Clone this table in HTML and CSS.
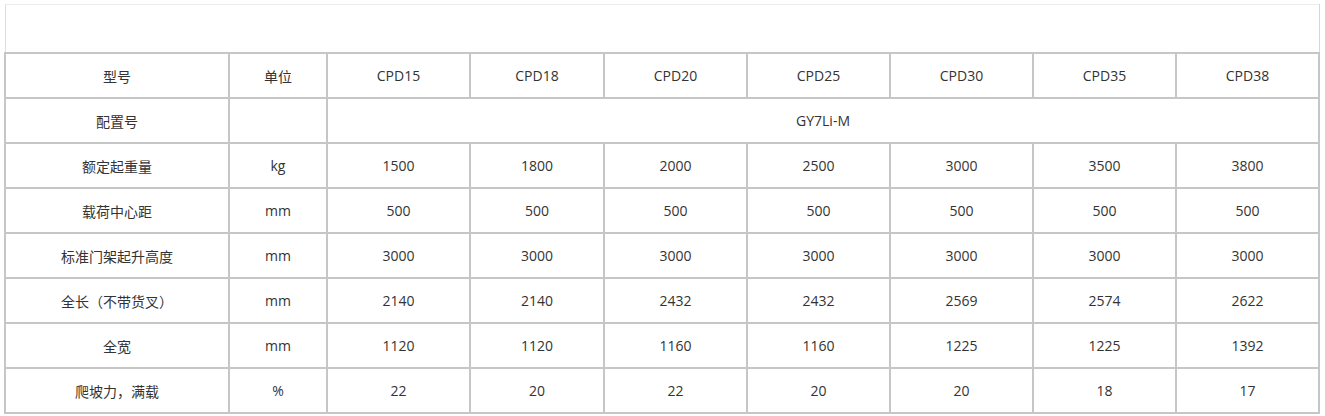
FILE: index.html
```html
<!DOCTYPE html>
<html lang="zh">
<head>
<meta charset="utf-8">
<link rel="stylesheet" href="styles.css">
</head>
<body>
<div class="wrap">
<table class="spec">
<colgroup>
<col class="c-name"><col class="c-unit"><col class="c-w"><col class="c-n"><col class="c-w"><col class="c-w"><col class="c-w"><col class="c-w"><col class="c-w">
</colgroup>
<tr class="head-blank"><td colspan="9"></td></tr>
<tr><td>型号</td><td>单位</td><td>CPD15</td><td>CPD18</td><td>CPD20</td><td>CPD25</td><td>CPD30</td><td>CPD35</td><td>CPD38</td></tr>
<tr><td>配置号</td><td></td><td colspan="7">GY7Li-M</td></tr>
<tr><td>额定起重量</td><td>kg</td><td>1500</td><td>1800</td><td>2000</td><td>2500</td><td>3000</td><td>3500</td><td>3800</td></tr>
<tr><td>载荷中心距</td><td>mm</td><td>500</td><td>500</td><td>500</td><td>500</td><td>500</td><td>500</td><td>500</td></tr>
<tr><td>标准门架起升高度</td><td>mm</td><td>3000</td><td>3000</td><td>3000</td><td>3000</td><td>3000</td><td>3000</td><td>3000</td></tr>
<tr><td>全长（不带货叉）</td><td>mm</td><td>2140</td><td>2140</td><td>2432</td><td>2432</td><td>2569</td><td>2574</td><td>2622</td></tr>
<tr><td>全宽</td><td>mm</td><td>1120</td><td>1120</td><td>1160</td><td>1160</td><td>1225</td><td>1225</td><td>1392</td></tr>
<tr><td>爬坡力，满载</td><td>%</td><td>22</td><td>20</td><td>22</td><td>20</td><td>20</td><td>18</td><td>17</td></tr>
</table>
</div>
</body>
</html>
```
FILE: styles.css
```css
html, body {
  margin: 0;
  padding: 0;
  background: #ffffff;
}
.wrap {
  padding: 4px 0 0 4px;
}
.spec {
  border-collapse: collapse;
  table-layout: fixed;
  width: 1316px;
  font-family: "Open Sans", "Noto Sans CJK SC", sans-serif;
  font-size: 14px;
  color: #333333;
}
.c-name { width: 224px; }
.c-unit { width: 98px; }
.c-w { width: 143px; }
.c-n { width: 134px; }
.spec td {
  border: 2px solid #c6c6c6;
  height: 43px;
  padding: 0;
  text-align: center;
  vertical-align: middle;
}
.spec .head-blank td {
  height: 47px;
  padding: 0;
  border-top: 1px solid #ececec;
  border-left: 1px solid #dedede;
  border-right: 1px solid #d6d6d6;
}
```
